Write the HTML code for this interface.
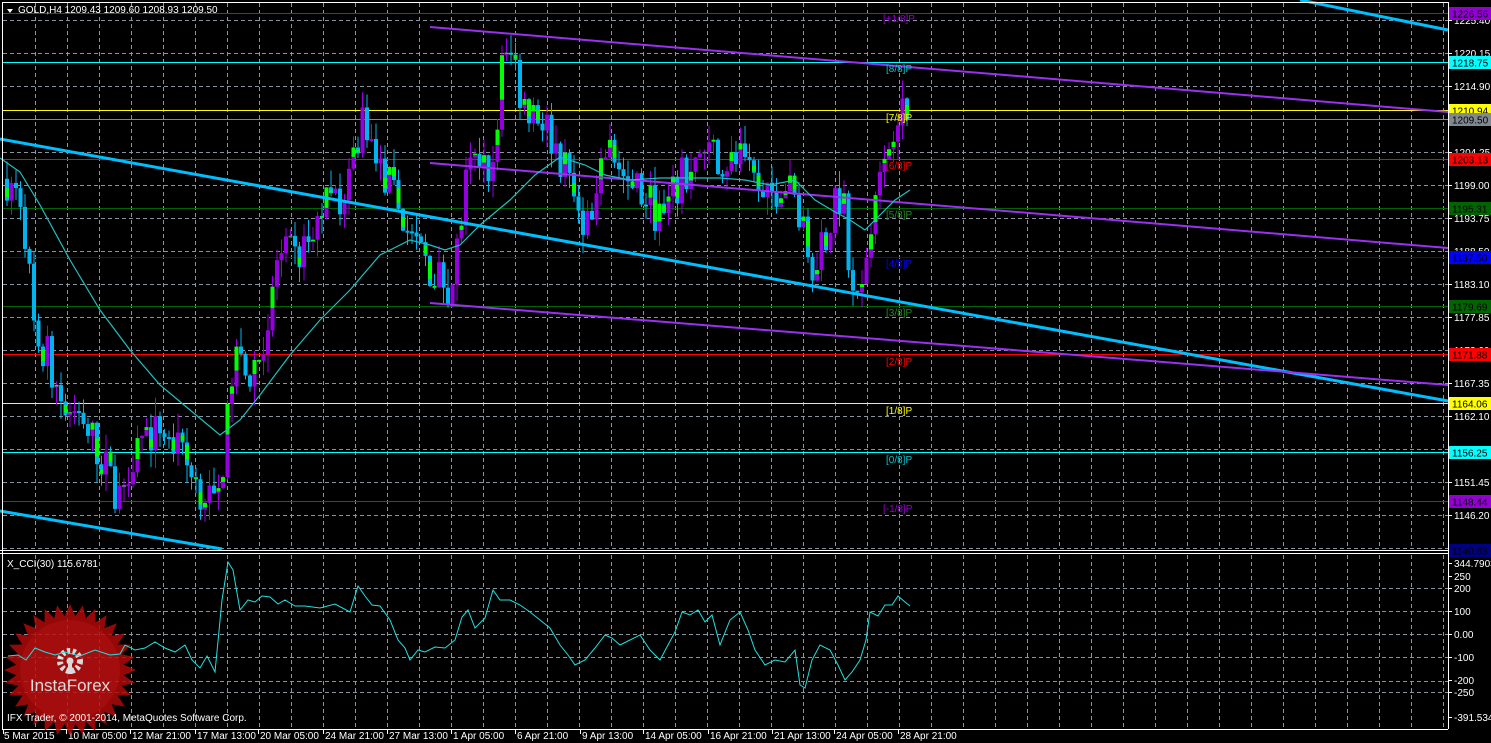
<!DOCTYPE html>
<html><head><meta charset="utf-8"><style>
html,body{margin:0;padding:0;background:#000;overflow:hidden}
svg{display:block;font-family:"Liberation Sans",sans-serif}
</style></head><body>
<svg id="s" width="1491" height="743" viewBox="0 0 1491 743" xmlns="http://www.w3.org/2000/svg">
<rect width="1491" height="743" fill="#000"/>
<g id="grid" stroke="#8a94a0" stroke-dasharray="4,3" stroke-width="1"></g>
<g id="levels"></g>
<g id="cands"></g>
<g fill="none">
<polyline points="0,139 1448,401" stroke="#00bfff" stroke-width="3"/>
<polyline points="0,511 222,549" stroke="#00bfff" stroke-width="3"/>
<polyline points="1300,0 1448,30" stroke="#00bfff" stroke-width="3"/>
<polyline points="430,27 1448,112" stroke="#9a30f0" stroke-width="2"/>
<polyline points="430,163 1448,248" stroke="#9a30f0" stroke-width="2"/>
<polyline points="430,303 1448,385" stroke="#9a30f0" stroke-width="2"/>
<polyline points="0,158 20,172 40,205 70,260 100,310 130,350 160,385 190,410 220,435 240,420 260,395 290,355 320,320 350,290 380,255 410,240 430,245 445,250 460,245 480,225 510,200 535,175 560,157 585,165 605,175 630,180 660,178 690,178 720,178 745,180 770,185 795,180 815,200 835,212 850,220 865,230 880,215 895,200 910,190" stroke="#20c0c0" stroke-width="1.2"/>
</g>
<g id="murrey" font-size="10"></g>
<line x1="2" y1="2.5" x2="1448" y2="2.5" stroke="#fff"/>
<line x1="2.5" y1="2" x2="2.5" y2="729" stroke="#fff"/>
<line x1="1448.5" y1="2" x2="1448.5" y2="729" stroke="#fff"/>
<line x1="0" y1="550.5" x2="1448" y2="550.5" stroke="#fff"/>
<line x1="0" y1="553.5" x2="1448" y2="553.5" stroke="#fff"/>
<line x1="2" y1="729.5" x2="1448" y2="729.5" stroke="#fff"/>
<g id="axis" fill="#fff" font-size="10"></g>
<g id="ccigrid" stroke="#8a94a0" stroke-dasharray="4,3"></g>
<g transform="translate(70,670)" opacity="0.85">
<polygon id="star" fill="#b00a0a"/>
<circle r="50" fill="#c01010"/>
<g fill="#fff" transform="translate(0,-9)">
<circle cx="0" cy="0" r="10" fill="none" stroke="#fff" stroke-width="6" stroke-dasharray="3,2.5"/>
<circle cx="0" cy="0" r="3.5"/>
<rect x="-2" y="0" width="4" height="13"/>
</g>
<text x="0" y="21" fill="#fff" font-size="17" text-anchor="middle">InstaForex</text>
</g>
<polyline id="cci" fill="none" stroke="#22e0e0" stroke-width="1" points="8,656 18,655 26,660 35,648 45,652 55,655 65,652 80,656 95,650 110,655 120,654 125,645 135,650 145,648 155,642 165,648 175,652 185,645 192,660 200,668 207,656 215,672 222,600 228,562 233,570 240,610 248,600 255,602 262,596 270,597 278,604 285,600 295,606 305,606 320,608 335,604 350,612 358,586 365,596 372,605 380,606 390,620 398,640 405,648 410,660 418,650 425,652 435,647 445,648 455,640 462,617 468,610 475,628 485,618 493,590 500,600 510,600 520,605 530,612 540,620 550,628 560,645 568,655 575,665 585,660 595,648 605,635 612,638 620,645 630,640 640,635 650,650 660,660 668,645 675,632 682,612 690,615 698,610 705,622 712,615 720,645 730,620 740,612 748,630 755,650 765,665 775,660 785,662 795,650 800,685 805,688 812,660 820,645 830,650 838,665 845,680 852,672 860,660 866,640 870,612 878,616 885,605 892,605 898,596 905,602 910,606"/>
<text x="7" y="567" fill="#fff" font-size="10">X_CCI(30) 115.6781</text>
<text x="7" y="721" fill="#fff" font-size="10">IFX Trader, © 2001-2014, MetaQuotes Software Corp.</text>
<polygon points="7,9 13,9 10,13" fill="#fff"/>
<text x="18" y="13" fill="#fff" font-size="10">GOLD,H4  1209.43 1209.60 1208.93 1209.50</text>
</svg>
<script>
(function(){
var NS="http://www.w3.org/2000/svg";
function el(p,t,a,txt){var e=document.createElementNS(NS,t);for(var k in a)e.setAttribute(k,a[k]);if(txt!=null)e.textContent=txt;document.getElementById(p).appendChild(e);return e;}
function Y(p){return 20+(1225.4-p)*6.25;}
for(var x=35;x<1448;x+=32){el("grid","line",{x1:x+.5,y1:3,x2:x+.5,y2:549});el("ccigrid","line",{x1:x+.5,y1:555,x2:x+.5,y2:728});}
for(var k=0;k<17;k++){var y=20+33*k;if(y>549)break;el("grid","line",{x1:3,y1:y+.5,x2:1448,y2:y+.5});}
[588,611,634,657,681,692].forEach(function(y){el("ccigrid","line",{x1:3,y1:y+.5,x2:1448,y2:y+.5});});
var ax=[["1225.40",20],["1220.15",53],["1214.90",86],["1204.25",152],["1199.00",185],["1193.75",218],["1188.50",251],["1183.10",284],["1177.85",317],["1172.60",350],["1167.35",383],["1162.10",416],["1156.85",449],["1151.45",482],["1146.20",515]];
ax.forEach(function(a){el("axis","line",{x1:1448,y1:a[1]+.5,x2:1452,y2:a[1]+.5,stroke:"#fff"});el("axis","text",{x:1454,y:a[1]+4},a[0]);});
[["344.7903",563],["250",576],["200",588],["100",611],["0.00",634],["-100",657],["-200",680],["-250",692],["-391.534",717]].forEach(function(a){el("axis","line",{x1:1448,y1:a[1]+.5,x2:1452,y2:a[1]+.5,stroke:"#fff"});el("axis","text",{x:1454,y:a[1]+4},a[0]);});
var tl=[["5 Mar 2015",2],["10 Mar 05:00",66],["12 Mar 21:00",130],["17 Mar 13:00",195],["20 Mar 05:00",258],["24 Mar 21:00",323],["27 Mar 13:00",387],["1 Apr 05:00",451],["6 Apr 21:00",515],["9 Apr 13:00",580],["14 Apr 05:00",643],["16 Apr 21:00",708],["21 Apr 13:00",772],["24 Apr 05:00",834],["28 Apr 21:00",898]];
tl.forEach(function(a){var tx=a[0]=="5 Mar 2015"?3:a[1];el("axis","line",{x1:tx+.5,y1:730,x2:tx+.5,y2:734,stroke:"#fff"});el("axis","text",{x:a[1]+2,y:739},a[0]);});
var lv=[[1226.56,"#9400d3"],[1218.75,"#00ffff"],[1210.94,"#ffff00"],[1209.50,"#808890",1],[1203.13,"#ff0000"],[1195.31,"#006400"],[1187.50,"#0000ff"],[1179.69,"#006400"],[1171.88,"#ff0000"],[1164.06,"#ffff00"],[1156.25,"#00ffff"],[1148.44,"#9400d3"],[1140.63,"#000080"]];
lv.forEach(function(l){var y=Math.round(Y(l[0]))+.5;el("levels","line",{x1:3,y1:y,x2:1448,y2:y,stroke:l[1]});
var bg=l[3]?"#fff":l[1];el("axis","rect",{x:1449,y:y-6.5,width:42,height:13,fill:bg});el("axis","text",{x:1452,y:y+4,fill:"#000"},l[0].toFixed(2));});
var mu=[["[+1/8]P","#9400d3",883,22],["[8/8]P","#00c8d0",886,72],["[7/8]P","#ffff00",886,121],["[6/8]P","#ff0000",886,169],["[5/8]P","#228b22",886,218],["[4/8]P","#0000ff",886,267],["[3/8]P","#228b22",886,316],["[2/8]P","#ff0000",886,365],["[1/8]P","#ffff00",886,414],["[0/8]P","#00c8d0",886,463],["[-1/8]P","#9400d3",883,512]];
mu.forEach(function(m){el("murrey","text",{x:m[2],y:m[3],fill:m[1]},m[0]);});
var pts=[];for(var i=0;i<64;i++){var r=i%2?54:66,a=i*Math.PI/32;pts.push((r*Math.cos(a)).toFixed(1)+","+(r*Math.sin(a)).toFixed(1));}
document.getElementById("star").setAttribute("points",pts.join(" "));
var kp=[[5,1200],[20,1197],[30,1180],[35,1170],[45,1172],[60,1165],[80,1162],[100,1155],[115,1150],[135,1158],[160,1160],[180,1155],[200,1150],[215,1148],[225,1160],[232,1172],[245,1168],[265,1175],[275,1187],[300,1188],[320,1195],[340,1198],[355,1205],[362,1212],[372,1203],[390,1198],[410,1190],[430,1185],[450,1183],[465,1200],[480,1205],[490,1200],[500,1218],[512,1220],[520,1212],[540,1210],[560,1203],[575,1195],[590,1193],[605,1205],[625,1200],[645,1197],[660,1193],[680,1200],[700,1205],[720,1203],[740,1203],[760,1195],[780,1200],[790,1198],[800,1192],[810,1187],[825,1192],[840,1198],[850,1181],[860,1182],[870,1196],[880,1200],[895,1212],[905,1209.5]];
function P(x){for(var i=1;i<kp.length;i++){if(x<=kp[i][0]){var a=kp[i-1],b=kp[i],t=(x-a[0])/(b[0]-a[0]);return a[1]+(b[1]-a[1])*t;}}return kp[kp.length-1][1];}
var seed=7;function rnd(){seed=(seed*16807)%2147483647;return seed/2147483647;}
var prev=P(5);
for(var x=5;x<=905;x+=4.5){var c=P(x)+(rnd()-.5)*7;if(x>=902)c=1209.5;var o=prev;var hi=Math.max(o,c)+rnd()*3,lo=Math.min(o,c)-rnd()*3;
var bull=c>=o;var col=bull?"#9400e0":"#00b4f0";
el("cands","line",{x1:x+2,y1:Y(hi),x2:x+2,y2:Y(lo),stroke:col});
var bt=Y(Math.max(o,c)),h=Math.max(2,Math.abs(Y(o)-Y(c)));
el("cands","rect",{x:x,y:bt,width:4,height:h,fill:col});
if(rnd()<0.5){var f=rnd()*0.6;el("cands","rect",{x:x,y:bull?bt:bt+h*f,width:4,height:h*(1-f)*0.7,fill:"#00ff00"});}
prev=c;}
})();
</script>
</body></html>
